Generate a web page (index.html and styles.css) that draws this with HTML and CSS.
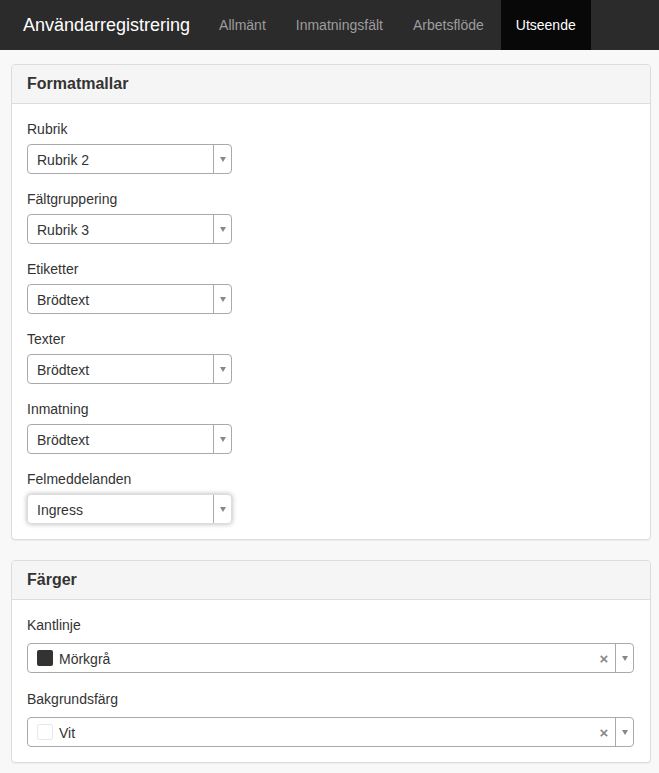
FILE: index.html
```html
<!DOCTYPE html>
<html lang="sv">
<head>
<meta charset="utf-8">
<title>Användarregistrering</title>
<link rel="stylesheet" href="styles.css">
</head>
<body>
<nav class="navbar">
  <span class="brand">Användarregistrering</span>
  <ul class="nav">
    <li>Allmänt</li>
    <li>Inmatningsfält</li>
    <li>Arbetsflöde</li>
    <li class="active">Utseende</li>
  </ul>
</nav>
<main class="content">
  <section class="panel">
    <div class="panel-heading"><h3>Formatmallar</h3></div>
    <div class="panel-body">
      <div class="form-group">
        <label>Rubrik</label>
        <div class="select small"><span class="value">Rubrik 2</span><span class="arrow"><i></i></span></div>
      </div>
      <div class="form-group">
        <label>Fältgruppering</label>
        <div class="select small"><span class="value">Rubrik 3</span><span class="arrow"><i></i></span></div>
      </div>
      <div class="form-group">
        <label>Etiketter</label>
        <div class="select small"><span class="value">Brödtext</span><span class="arrow"><i></i></span></div>
      </div>
      <div class="form-group">
        <label>Texter</label>
        <div class="select small"><span class="value">Brödtext</span><span class="arrow"><i></i></span></div>
      </div>
      <div class="form-group">
        <label>Inmatning</label>
        <div class="select small"><span class="value">Brödtext</span><span class="arrow"><i></i></span></div>
      </div>
      <div class="form-group">
        <label>Felmeddelanden</label>
        <div class="select small focus"><span class="value">Ingress</span><span class="arrow"><i></i></span></div>
      </div>
    </div>
  </section>
  <section class="panel">
    <div class="panel-heading"><h3>Färger</h3></div>
    <div class="panel-body colors">
      <div class="form-group">
        <label>Kantlinje</label>
        <div class="select wide"><span class="swatch dark"></span><span class="value">Mörkgrå</span><span class="clear">×</span><span class="arrow"><i></i></span></div>
      </div>
      <div class="form-group">
        <label>Bakgrundsfärg</label>
        <div class="select wide"><span class="swatch white"></span><span class="value">Vit</span><span class="clear">×</span><span class="arrow"><i></i></span></div>
      </div>
    </div>
  </section>
</main>
</body>
</html>
```
FILE: styles.css
```css
* { box-sizing: border-box; }
html, body { margin: 0; padding: 0; }
body {
  background: #f8f8f8;
  font-family: "Liberation Sans", Arial, Helvetica, sans-serif;
  font-size: 14px;
  line-height: 20px;
  color: #333;
}
.navbar {
  height: 50px;
  background: #2b2b2b;
  display: flex;
  align-items: stretch;
}
.brand {
  padding: 0 14px 0 23px;
  font-size: 18px;
  line-height: 50px;
  color: #fff;
  white-space: nowrap;
}
.nav {
  list-style: none;
  margin: 0;
  padding: 0;
  display: flex;
}
.nav li {
  padding: 0 15px;
  line-height: 50px;
  color: #9d9d9d;
  white-space: nowrap;
}
.nav li.active {
  background: #080808;
  color: #fff;
  margin-left: 2px;
}
.content {
  padding: 14px 8px 0 11px;
}
.panel {
  width: 640px;
  background: #fff;
  border: 1px solid #ddd;
  border-radius: 4px;
  margin-bottom: 20px;
  box-shadow: 0 1px 1px rgba(0,0,0,0.05);
}
.panel-heading {
  background: #f5f5f5;
  border-bottom: 1px solid #ddd;
  border-radius: 3px 3px 0 0;
  padding: 10px 15px;
}
.panel-heading h3 {
  margin: 0;
  font-size: 16px;
  line-height: 18px;
  font-weight: bold;
  color: #333;
}
.panel-body {
  padding: 15px;
}
.form-group {
  display: flex;
  flex-direction: column;
  align-items: flex-start;
  margin-bottom: 15px;
}
.form-group:last-child { margin-bottom: 0; }
label {
  display: block;
  margin-bottom: 5px;
}
.colors label { margin-bottom: 8px; }
.colors .form-group { margin-bottom: 16px; }
.colors .form-group:last-child { margin-bottom: 0; }
.select {
  height: 30px;
  border: 1px solid #aaa;
  border-radius: 4px;
  background: #fff;
  display: flex;
  align-items: center;
  color: #333;
}
.select.small { width: 205px; }
.select.wide { width: 607px; }
.select.focus {
  border-color: #ddd;
  box-shadow: 0 0 5px rgba(0,0,0,0.3);
}
.select .value {
  flex: 1;
  padding-left: 9px;
  padding-top: 2px;
}
.select .arrow {
  width: 18px;
  align-self: stretch;
  border-left: 1px solid #aaa;
  display: flex;
  align-items: center;
  justify-content: center;
}
.select .arrow i {
  width: 0;
  height: 0;
  border-left: 3px solid transparent;
  border-right: 3px solid transparent;
  border-top: 5px solid #888;
  margin-top: 1px;
}
.select .swatch {
  width: 16px;
  height: 16px;
  border-radius: 2px;
  margin-left: 9px;
  flex: none;
}
.select .swatch + .value { padding-left: 6px; }
.swatch.dark { background: #333; }
.swatch.white { background: #fff; border: 1px solid #e8e8e8; }
.select .clear {
  font-size: 15px;
  font-weight: bold;
  color: #888;
  width: 22px;
  text-align: center;
  padding-top: 1px;
}
```
